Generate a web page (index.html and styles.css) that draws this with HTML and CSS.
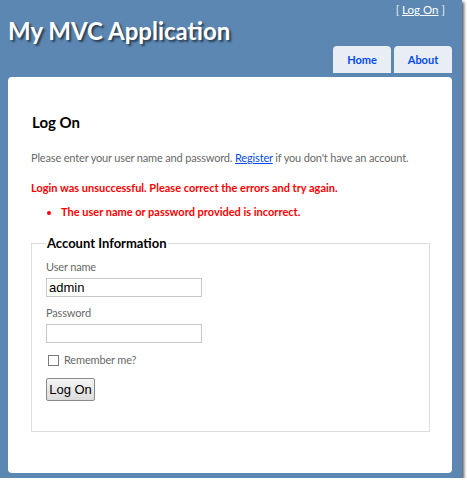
FILE: index.html
```html
<!DOCTYPE html>
<html>
<head>
<meta charset="utf-8">
<title>Log On</title>
<link rel="stylesheet" href="styles.css">
</head>
<body>
<div class="page">
  <div class="header">
    <div class="title">My MVC Application</div>
    <div class="header-right">
      <div class="logindisplay">[ <a href="#">Log On</a> ]</div>
      <ul class="menu">
        <li><a href="#">Home</a></li>
        <li><a href="#">About</a></li>
      </ul>
    </div>
  </div>
  <div class="main">
    <h2 class="heading">Log On</h2>
    <p class="intro">Please enter your user name and password. <a href="#">Register</a> if you don't have an account.</p>
    <p class="error">Login was unsuccessful. Please correct the errors and try again.</p>
    <ul class="errors">
      <li>The user name or password provided is incorrect.</li>
    </ul>
    <fieldset class="account">
      <legend>Account Information</legend>
      <div class="label">User name</div>
      <input class="field" type="text" value="admin">
      <div class="label">Password</div>
      <input class="field" type="password" value="">
      <label class="remember"><span class="box"></span>Remember me?</label>
      <button class="submit" type="button">Log On</button>
    </fieldset>
  </div>
</div>
</body>
</html>
```
FILE: styles.css
```css
html, body {
  margin: 0;
  padding: 0;
  background: #ffffff;
}
body {
  font-family: "Lato", "DejaVu Sans", sans-serif;
  font-size: 11px;
  color: #696969;
}
.page {
  width: 462px;
  height: 478px;
  background: #5c87b2;
  box-shadow: 2px 2px 3px rgba(0, 0, 0, 0.65);
  display: flex;
  flex-direction: column;
}
.header {
  height: 73px;
  display: flex;
  justify-content: space-between;
  padding: 0 10px 0 8px;
  margin-bottom: 4px;
}
.title {
  color: #ffffff;
  font-weight: bold;
  font-size: 24px;
  line-height: 30px;
  margin-top: 16px;
  text-shadow: 2px 2px 2px rgba(0, 0, 0, 0.55);
}
.header-right {
  display: flex;
  flex-direction: column;
  align-items: flex-end;
  justify-content: space-between;
}
.logindisplay {
  color: #e8eef4;
  font-size: 11.5px;
  line-height: 14px;
  margin-top: 3px;
  margin-right: 7px;
}
.logindisplay a {
  color: #ffffff;
  text-decoration: underline;
}
.menu {
  list-style: none;
  margin: 0;
  padding: 0;
  display: flex;
  gap: 3px;
}
.menu li {
  width: 58px;
  height: 27px;
  background: #e8eef4;
  border-radius: 4px 4px 0 0;
  display: flex;
  align-items: center;
  justify-content: center;
}
.menu a {
  color: #034af3;
  font-weight: bold;
  font-size: 11px;
  text-decoration: none;
}
.main {
  margin: 0 10px 0 8px;
  height: 396px;
  background: #ffffff;
  border-radius: 4px;
  padding: 0 22px 0 23px;
  display: flex;
  flex-direction: column;
}
.heading {
  margin: 35px 0 0 1px;
  font-size: 15px;
  line-height: 20px;
  color: #000000;
  font-weight: bold;
}
.intro {
  margin: 19px 0 0 0;
  line-height: 14px;
  letter-spacing: -0.16px;
}
.intro a {
  color: #034af3;
  text-decoration: underline;
}
.error {
  margin: 16px 0 0 0;
  line-height: 14px;
  color: #ff0000;
  font-weight: bold;
}
.errors {
  margin: 10px 0 0 0;
  padding-left: 30px;
  line-height: 14px;
  color: #ff0000;
  font-weight: bold;
}
.account {
  margin: 16px 0 0 0;
  padding: 0 14px 30px 14px;
  border: 1px solid #dddddd;
  display: flex;
  flex-direction: column;
  align-items: flex-start;
}
.account legend {
  padding: 0 1px;
  font-size: 13px;
  line-height: 16px;
  font-weight: bold;
  color: #000000;
}
.label {
  line-height: 14px;
  margin-top: 9px;
  letter-spacing: -0.16px;
}
.field {
  margin: 4px 0 0 0;
  width: 156px;
  height: 19px;
  box-sizing: border-box;
  border: 1px solid #c8c8c8;
  padding: 0 2px;
  font-family: "Liberation Sans", Arial, sans-serif;
  font-size: 13px;
  color: #000000;
  outline: none;
}
.remember {
  margin-top: 10px;
  line-height: 14px;
  display: flex;
  align-items: center;
  gap: 5px;
  padding-left: 2px;
  letter-spacing: -0.16px;
}
.box {
  width: 11px;
  height: 11px;
  box-sizing: border-box;
  border: 1px solid #7a7a7a;
  background: #ffffff;
}
.submit {
  margin-top: 11px;
  width: 49px;
  height: 23px;
  border: 1px solid #8a8a8a;
  border-radius: 2px;
  background: linear-gradient(#f4f4f4, #dcdcdc);
  font-family: "Liberation Sans", Arial, sans-serif;
  font-size: 13px;
  color: #000000;
  padding: 0;
}
```
